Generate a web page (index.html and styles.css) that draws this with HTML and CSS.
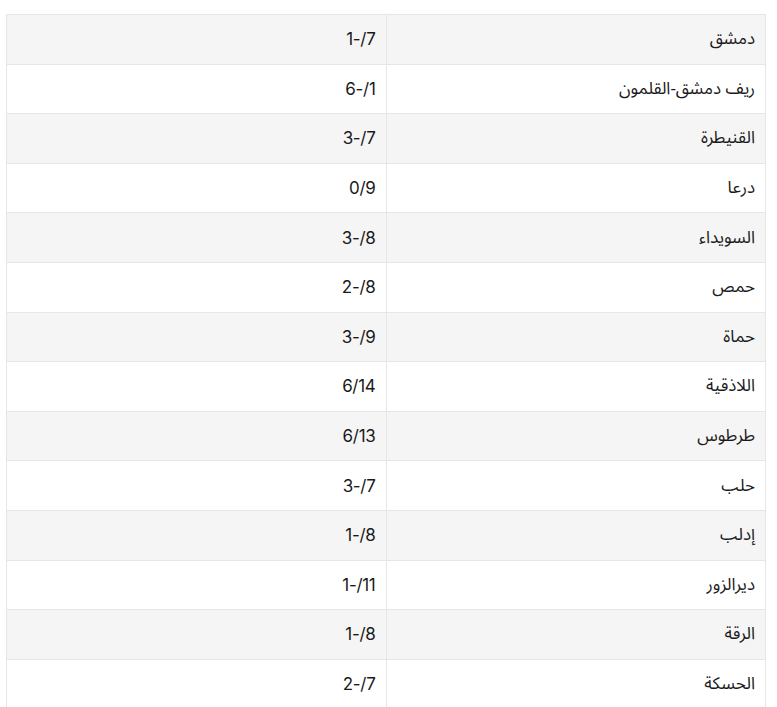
FILE: index.html
```html
<!DOCTYPE html>
<html lang="ar" dir="rtl">
<head>
<meta charset="utf-8">
<link rel="stylesheet" href="styles.css">
</head>
<body>
<div class="wrap">
<table class="grid">
<tbody>
<tr><td class="name">دمشق</td><td class="num"><span dir="ltr">1-/7</span></td></tr>
<tr><td class="name">ريف دمشق-القلمون</td><td class="num"><span dir="ltr">6-/1</span></td></tr>
<tr><td class="name">القنيطرة</td><td class="num"><span dir="ltr">3-/7</span></td></tr>
<tr><td class="name">درعا</td><td class="num"><span dir="ltr">0/9</span></td></tr>
<tr><td class="name">السويداء</td><td class="num"><span dir="ltr">3-/8</span></td></tr>
<tr><td class="name">حمص</td><td class="num"><span dir="ltr">2-/8</span></td></tr>
<tr><td class="name">حماة</td><td class="num"><span dir="ltr">3-/9</span></td></tr>
<tr><td class="name">اللاذقية</td><td class="num"><span dir="ltr">6/14</span></td></tr>
<tr><td class="name">طرطوس</td><td class="num"><span dir="ltr">6/13</span></td></tr>
<tr><td class="name">حلب</td><td class="num"><span dir="ltr">3-/7</span></td></tr>
<tr><td class="name">إدلب</td><td class="num"><span dir="ltr">1-/8</span></td></tr>
<tr><td class="name">ديرالزور</td><td class="num"><span dir="ltr">1-/11</span></td></tr>
<tr><td class="name">الرقة</td><td class="num"><span dir="ltr">1-/8</span></td></tr>
<tr><td class="name">الحسكة</td><td class="num"><span dir="ltr">2-/7</span></td></tr>
</tbody>
</table>
</div>
</body>
</html>
```
FILE: styles.css
```css
html, body {
  margin: 0;
  padding: 0;
  background: #fff;
}
body {
  font-family: "Noto Sans Arabic", "Noto Sans", "DejaVu Sans", sans-serif;
  color: #1a1a1a;
}
.wrap {
  padding: 14px 11px 0 6px;
}
.grid {
  width: 100%;
  border-collapse: collapse;
  table-layout: fixed;
}
.grid tr {
  height: 49.6px;
}
.grid tr:nth-child(odd) {
  background: #f5f5f5;
}
.grid td {
  border: 1px solid #e6e6e6;
  padding: 0 10px;
  font-size: 17px;
  text-align: right;
  vertical-align: middle;
}
.grid td.num {
  font-family: Inter, "Noto Sans", sans-serif;
  font-size: 17px;
  letter-spacing: -0.3px;
}
```
